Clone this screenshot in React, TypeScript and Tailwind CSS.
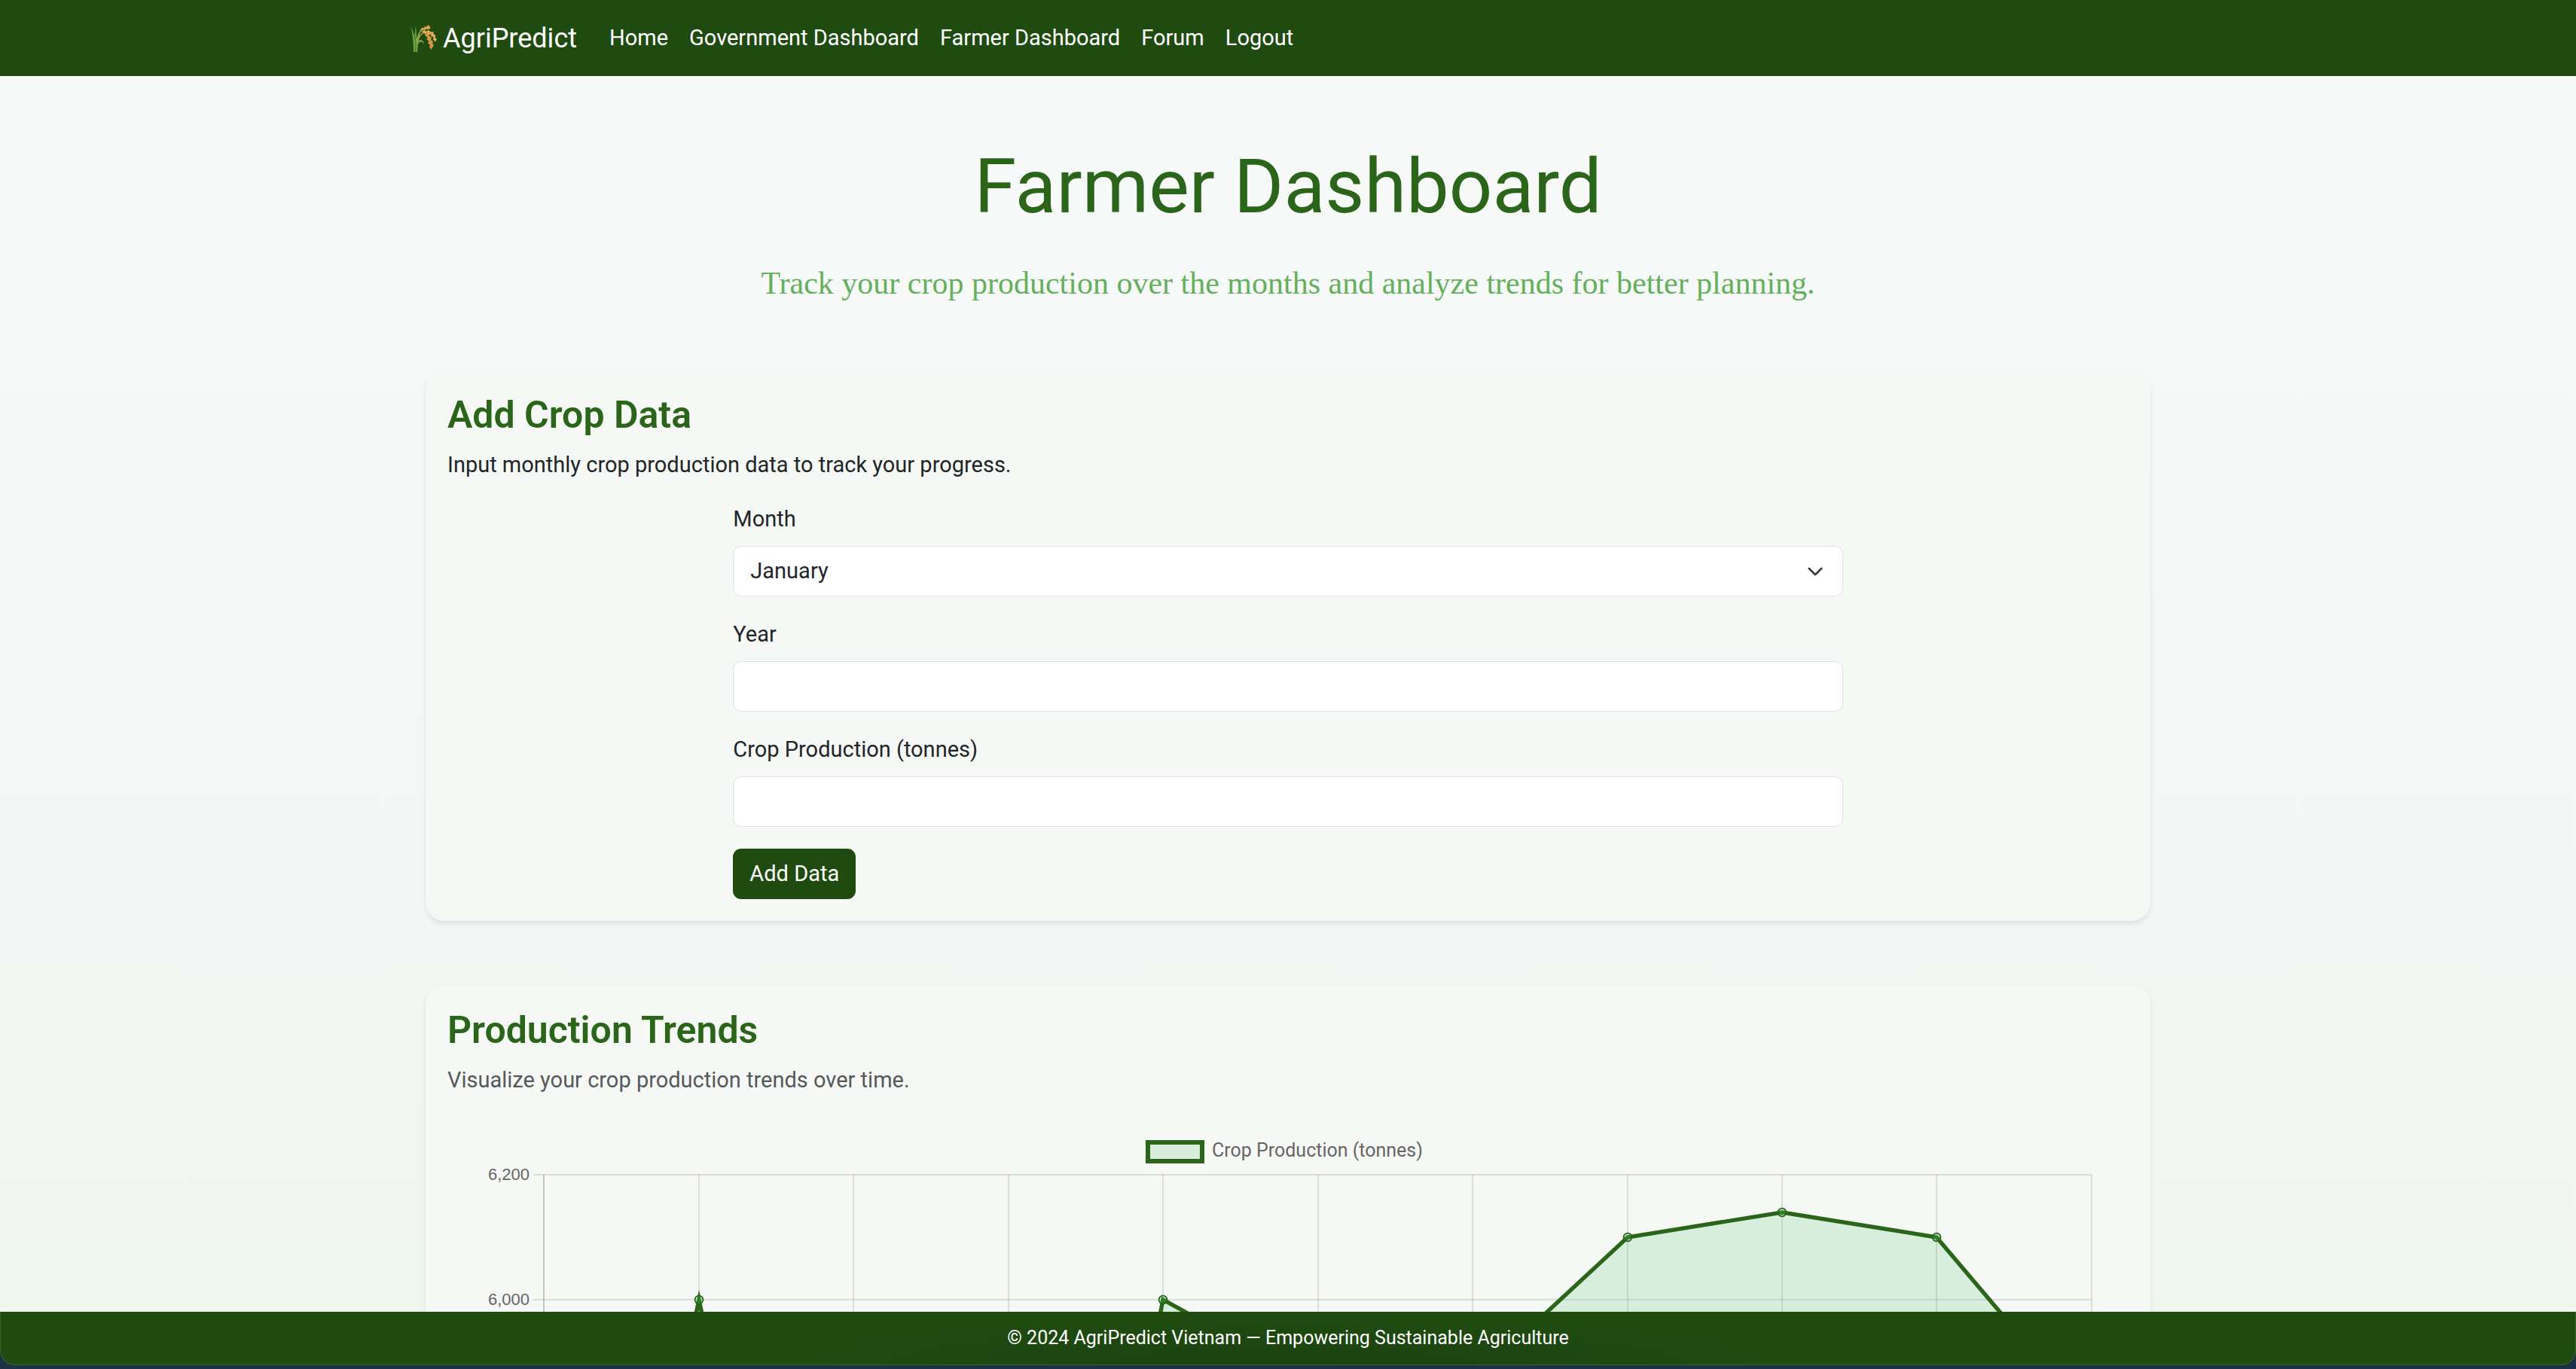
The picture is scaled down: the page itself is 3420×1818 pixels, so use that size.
import React from "react";

const navLinks = ["Home", "Government Dashboard", "Farmer Dashboard", "Forum", "Logout"];

const months = [
  "January", "February", "March", "April", "May", "June",
  "July", "August", "September", "October", "November", "December",
];

// Chart coordinates: x step between months, y of the plotted values.
const gridX = [128, 334, 539, 745, 950, 1156, 1361, 1567, 1772, 1977, 2183];
const gridY = [75, 241, 407, 573, 739, 905, 1070];
const ticks = [
  { y: 75, label: "6,200" },
  { y: 241, label: "6,000" },
];
const points = [
  [128, 1215], [334, 241], [539, 1215], [745, 1300], [950, 241], [1156, 354],
  [1361, 349], [1567, 158], [1772, 125], [1977, 158], [2183, 401],
];

function RiceIcon() {
  return (
    <svg viewBox="0 0 36 36" className="size-9 shrink-0" fill="none" aria-hidden="true">
      <path d="M5 36C5 25 4 11 1 2C4 7 6 13 7 19C7 12 7 7 8 2C9 9 9 15 9 20C11 13 12 9 15 6C13 14 11 24 10 36Z" fill="#6fa044" />
      <path d="M7.500 36C8 27 8 20 6 11" stroke="#47792a" strokeWidth="1" />
      <path d="M9 21C11 12 15 6 22 4" stroke="#a3a650" strokeWidth="1.300" />
      <path d="M10 22C13 13 17 9 23 10" stroke="#a3a650" strokeWidth="1.300" />
      <path d="M10 24C13 18 18 19 19 26C16 21 13 21 10 27Z" fill="#83b04c" />
      <path d="M14 7L16 4L19 4L20 2L23 2.500L24 0L27 2L26.500 3.500L28 4L25 6L22 5.500L20 7L17 6.500L15 8Z" fill="#dda753" />
      <path d="M16 9L19 7L22 8.500L25 7L28 9.500L31 9L32 12.500L34.500 14L33.500 17L36 19L34 22.500L31 19.500L31.500 16L28.500 15.500L28 12.500L25 13.500L23 11L19 11.500Z" fill="#e3ad5a" />
      <path d="M20 11L24 11.500L26.500 15L29 17L28 20L31 22L30 25L32 27L30 30L28.500 33L26 29L27 26.500L24 24.500L25.500 21.500L22.500 19.500L23.500 16.500L20.500 14.500Z" fill="#d49a47" />
      <path d="M18 5L25 3M22 9.500L28 11.500L33 17M24 14L27.500 23L28.500 29" stroke="#b27a34" strokeWidth="0.700" strokeDasharray="1.500 2" />
    </svg>
  );
}

function Field({ id, label, children }: { id: string; label: string; children: React.ReactNode }) {
  return (
    <div className="mb-[29px]">
      <label htmlFor={id} className="mb-[14px] block">{label}</label>
      {children}
    </div>
  );
}

function Card({ title, children }: { title: string; children: React.ReactNode }) {
  return (
    <section className="rounded-[25px] bg-[#f6f8f5] p-[29px] shadow-[0_4px_7px_rgba(0,0,0,0.09)]">
      <h2 className="mb-[14px] text-[50px] leading-[61px] font-semibold text-[#2a651a]">{title}</h2>
      {children}
    </section>
  );
}

function TrendChart() {
  const line = points.map((p) => p.join(",")).join(" ");
  return (
    <svg viewBox="0 0 2232 1116" className="block w-full" role="img" aria-label="Crop production in tonnes by month">
      <rect x="930" y="32" width="72" height="25" fill="#d8eeda" stroke="#2a651a" strokeWidth="6" />
      <text x="1015" y="51" fontSize="25" fill="#666666">Crop Production (tonnes)</text>
      <g stroke="#000000" strokeOpacity="0.1" strokeWidth="2">
        {gridX.map((x) => (
          <line key={x} x1={x} x2={x} y1="75" y2="1070" />
        ))}
        <line x1="128" x2="128" y1="75" y2="1070" />
        {gridY.map((y) => (
          <line key={y} x1="114" x2="2183" y1={y} y2={y} />
        ))}
      </g>
      {ticks.map(({ y, label }) => (
        <text key={y} x="109" y={y + 7} textAnchor="end" fontSize="22" fill="#666666" className="font-['Liberation_Sans',sans-serif]">
          {label}
        </text>
      ))}
      <polygon points={`128,1070 ${line} 2183,1070`} fill="#28b450" fillOpacity="0.15" />
      <polyline points={line} fill="none" stroke="#2a651a" strokeWidth="5.400" strokeMiterlimit="10" />
      {points.map(([x, y]) => (
        <circle key={x} cx={x} cy={y} r="5.400" fill="#4bc05a" fillOpacity="0.25" stroke="#2a651a" strokeWidth="1.800" />
      ))}
    </svg>
  );
}

export default function App() {
  const control =
    "block h-[67px] w-full appearance-none rounded-[11px] border border-[#dee2e6] bg-white px-[22px] text-[29px] text-[#212529]";
  return (
    <div className="flex h-screen flex-col bg-[#1c3046] font-[Roboto,sans-serif] text-[29px] leading-[43px] text-[#212529]">
      <header className="shrink-0 bg-[#1f4b11] text-white">
        <nav className="mx-auto flex h-[101px] max-w-[2376px] items-center px-[22px]">
          <a href="#" className="mr-[43px] flex items-center gap-2 text-[36px] leading-[54px]">
            <RiceIcon />
            AgriPredict
          </a>
          <ul className="flex gap-7">
            {navLinks.map((name) => (
              <li key={name}>
                <a href="#">{name}</a>
              </li>
            ))}
          </ul>
        </nav>
      </header>

      <main className="min-h-0 flex-1 overflow-y-auto bg-linear-to-b from-[#f8fafa] via-[#f5f7f7] to-[#f0f6f0] [scrollbar-width:none]">
        <div className="mx-auto max-w-[2290px] pt-[86px] pb-[86px]">
          <div className="mb-[86px] text-center">
            <h1 className="mb-[38px] text-[101px] leading-[121px] text-[#2a651a]">Farmer Dashboard</h1>
            <p className="font-['Liberation_Serif',serif] text-[42px] leading-[60px] text-[#65b05c]">
              Track your crop production over the months and analyze trends for better planning.
            </p>
          </div>

          <div className="flex flex-col gap-[86px]">
            <Card title="Add Crop Data">
              <p className="mb-[29px]">Input monthly crop production data to track your progress.</p>
              <div className="-mx-[22px] flex justify-center">
                <form className="w-2/3 px-[22px]">
                  <Field id="month" label="Month">
                    <div className="relative">
                      <select id="month" className={control}>
                        {months.map((m) => (
                          <option key={m}>{m}</option>
                        ))}
                      </select>
                      <svg viewBox="0 0 16 16" className="pointer-events-none absolute inset-y-0 right-[26px] my-auto size-[22px]" fill="none" aria-hidden="true">
                        <path d="m2 5 6 6 6-6" stroke="#343a40" strokeWidth="2" strokeLinecap="round" strokeLinejoin="round" />
                      </svg>
                    </div>
                  </Field>
                  <Field id="year" label="Year">
                    <input id="year" type="text" className={control} />
                  </Field>
                  <Field id="production" label="Crop Production (tonnes)">
                    <input id="production" type="text" className={control} />
                  </Field>
                  <button type="button" className="block h-[67px] rounded-[11px] bg-[#1f4b11] px-[22px] text-white">
                    Add Data
                  </button>
                </form>
              </div>
            </Card>

            <Card title="Production Trends">
              <p className="mb-[29px] text-[#56595c]">Visualize your crop production trends over time.</p>
              <TrendChart />
            </Card>
          </div>
        </div>
      </main>

      <footer className="mb-[5px] shrink-0 rounded-b-[20px] border-x border-b border-[#3a6529] bg-[#1f4b11] bg-[radial-gradient(ellipse_660px_60px_at_50%_100%,#1b410f,#1f4b11)] pt-4 pb-4 text-center text-[25px] leading-[38px] text-white">
        <p>© 2024 AgriPredict Vietnam — Empowering Sustainable Agriculture</p>
      </footer>
    </div>
  );
}
